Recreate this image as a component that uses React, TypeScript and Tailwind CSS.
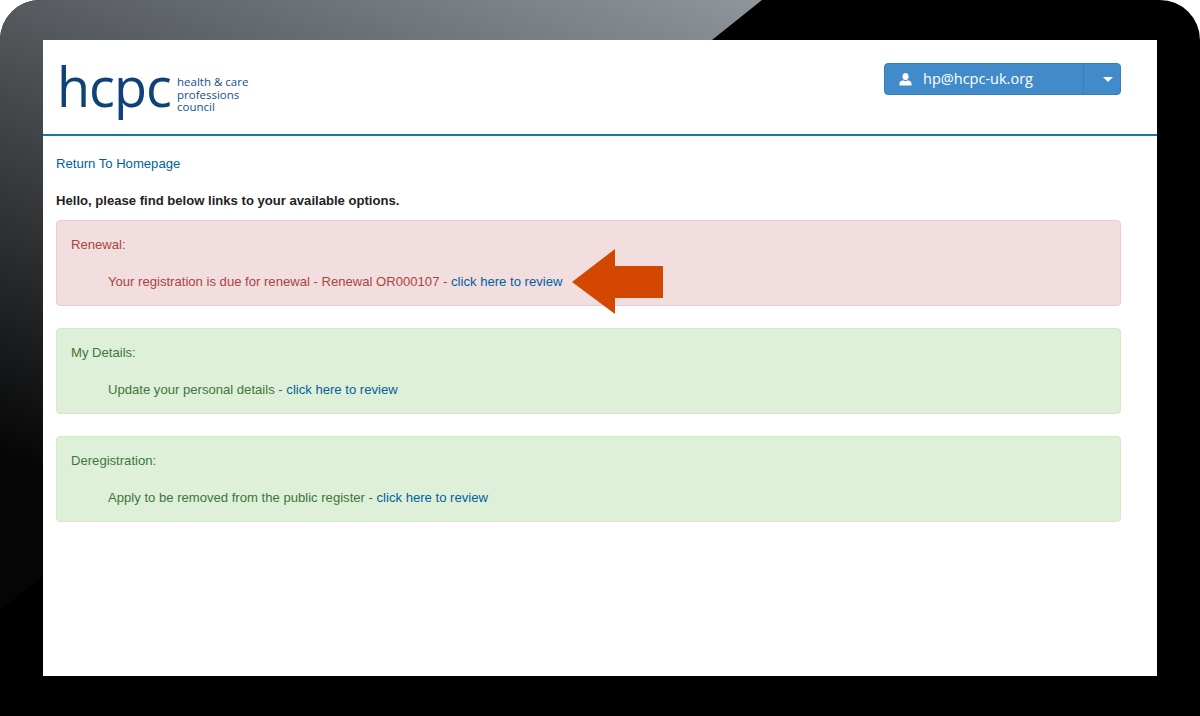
const sections = [
  {
    title: 'Renewal:',
    text: 'Your registration is due for renewal - Renewal OR000107 - ',
    box: 'bg-[#f2dede] border-[#ebccd1] text-[#a94442]',
    arrow: true,
  },
  {
    title: 'My Details:',
    text: 'Update your personal details - ',
    box: 'bg-[#dff0d8] border-[#d6e9c6] text-[#3c763d]',
    arrow: false,
  },
  {
    title: 'Deregistration:',
    text: 'Apply to be removed from the public register - ',
    box: 'bg-[#dff0d8] border-[#d6e9c6] text-[#3c763d]',
    arrow: false,
  },
];

function Glare() {
  return (
    <svg className="absolute inset-0" width="1200" height="716" viewBox="0 0 1200 716">
      <defs>
        <linearGradient id="glare" gradientUnits="userSpaceOnUse" x1="762" y1="0" x2="487" y2="660">
          <stop offset="0" stopColor="#8f969c" />
          <stop offset="1" stopColor="#050505" />
        </linearGradient>
      </defs>
      <polygon points="0,0 762,0 0,610" fill="url(#glare)" />
    </svg>
  );
}

function Logo() {
  return (
    <div className="flex items-start">
      <span className="w-[120px] -ml-[2px] text-[54px] leading-[68px] tracking-[-1px] font-medium text-[#0f4279] font-['Open_Sans',sans-serif]">
        hcpc
      </span>
      <div className="mt-[24px] text-[11.5px] leading-[12.5px] font-medium text-[#14508c] font-['Open_Sans',sans-serif]">
        <div>health &amp; care</div>
        <div>professions</div>
        <div>council</div>
      </div>
    </div>
  );
}

export default function App() {
  return (
    <div className="relative w-[1200px] h-[716px] overflow-hidden rounded-t-[40px] bg-black">
      <Glare />
      <main className="relative mx-[43px] mt-[40px] w-[1114px] h-[636px] bg-white font-['Liberation_Sans',sans-serif] text-[13.1px]">
        <header className="flex justify-between h-[96px] border-b-2 border-[#1a75a8] pl-[16px] pr-[36px]">
          <div className="pt-[12px]">
            <Logo />
          </div>
          <div className="mt-[23px] flex w-[237px] h-[32px] rounded border border-[#357ebd] bg-[#428bca] text-white font-['Open_Sans',sans-serif] text-[14.5px]">
            <div className="flex w-[199px] items-center pl-[14px] border-r border-[#357ebd]">
              <svg width="13" height="13" viewBox="0 0 13 13" fill="white">
                <ellipse cx="6.5" cy="3.6" rx="3" ry="3.5" />
                <path d="M0.5 12.5V10.2C0.5 8.6 2.2 7.6 4 7.2C5 8.2 8 8.2 9 7.2C10.8 7.6 12.5 8.6 12.5 10.2V12.5Z" />
              </svg>
              <span className="ml-[11px]">hp@hcpc-uk.org</span>
            </div>
            <div className="flex flex-1 items-center justify-center pl-[14px] pr-[2px]">
              <div className="w-0 h-0 border-x-[5px] border-x-transparent border-t-[5px] border-t-white" />
            </div>
          </div>
        </header>

        <div className="pl-[13px] pr-[36px]">
          <a className="block mt-[20px] leading-[16px] text-[#005f9e]">Return To Homepage</a>
          <p className="mt-[21px] leading-[16px] font-bold text-[#222]">
            Hello, please find below links to your available options.
          </p>
          <div className="mt-[11px] flex flex-col gap-[22px]">
            {sections.map((s) => (
              <section key={s.title} className={`relative h-[86px] rounded border px-[14px] pt-[15px] leading-[16px] ${s.box}`}>
                <div className="pt-[1px]">{s.title}</div>
                <div className="mt-[21px] pl-[37px]">
                  {s.text}
                  <a className="text-[#005f9e]">click here to review</a>
                </div>
                {s.arrow && (
                  <svg className="absolute left-[514px] top-[28px]" width="94" height="66" viewBox="0 0 94 66">
                    <polygon points="1,33 44,0 44,17 92,17 92,49 44,49 44,65" fill="#d34700" />
                  </svg>
                )}
              </section>
            ))}
          </div>
        </div>
      </main>
    </div>
  );
}
